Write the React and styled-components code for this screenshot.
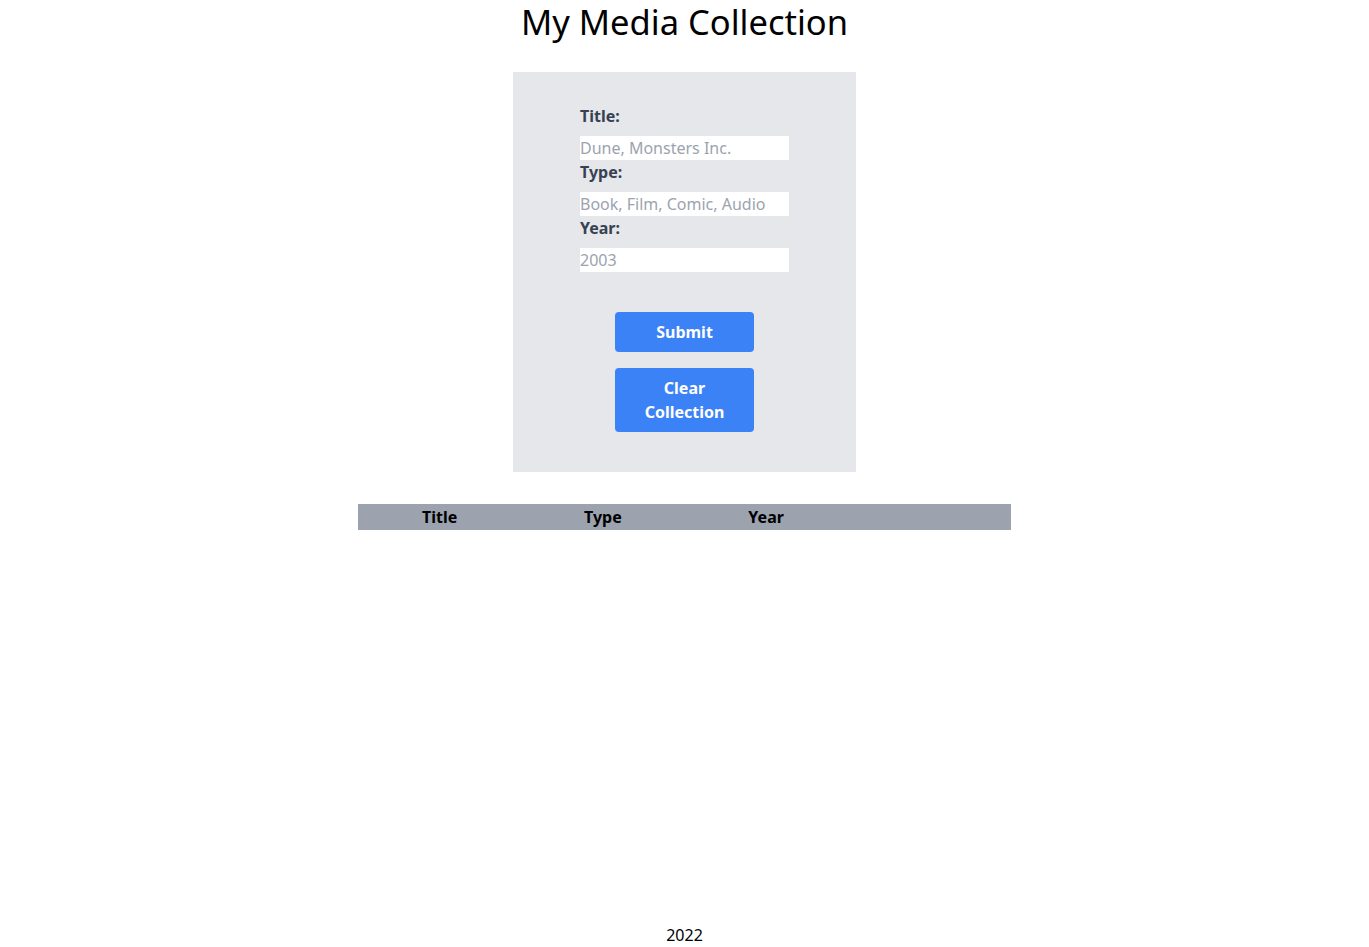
import styled, { createGlobalStyle } from 'styled-components';

const GlobalStyle = createGlobalStyle`
  html, body {
    margin: 0;
    padding: 0;
    background: #fff;
    font-family: 'Noto Sans', 'Open Sans', sans-serif;
  }
  * {
    box-sizing: border-box;
  }
`;

const FIELDS = [
  { label: 'Title:', placeholder: 'Dune, Monsters Inc.' },
  { label: 'Type:', placeholder: 'Book, Film, Comic, Audio' },
  { label: 'Year:', placeholder: '2003' },
];

const COLUMNS = ['Title', 'Type', 'Year', ''];

const App = () => {
  return (
    <Page>
      <GlobalStyle />
      <Main>
        <Heading>My Media Collection</Heading>
        <FormPanel onSubmit={(e) => e.preventDefault()}>
          <Fields>
            {FIELDS.map((f) => (
              <Field key={f.label}>
                <Label>{f.label}</Label>
                <Input placeholder={f.placeholder} />
              </Field>
            ))}
          </Fields>
          <Buttons>
            <Button type='submit'>Submit</Button>
            <Button type='button'>
              Clear
              <br />
              Collection
            </Button>
          </Buttons>
        </FormPanel>
        <Table>
          <thead>
            <tr>
              {COLUMNS.map((c, i) => (
                <Th key={i}>{c}</Th>
              ))}
            </tr>
          </thead>
          <tbody></tbody>
        </Table>
      </Main>
      <Footer>2022</Footer>
    </Page>
  );
};

export default App;

const Page = styled.div`
  display: flex;
  flex-direction: column;
  align-items: center;
  min-height: 100vh;
`;

const Main = styled.main`
  display: flex;
  flex-direction: column;
  align-items: center;
  width: 100%;
`;

const Heading = styled.h1`
  margin: 0 0 28px;
  font-size: 34.5px;
  font-weight: 400;
  line-height: 44px;
  color: #000;
`;

const FormPanel = styled.form`
  display: flex;
  flex-direction: column;
  align-items: center;

  width: 343px;
  padding: 32px 0 40px;
  background: #e5e7eb;
`;

const Fields = styled.div`
  display: flex;
  flex-direction: column;
  width: 209px;
`;

const Field = styled.div`
  display: flex;
  flex-direction: column;
`;

const Label = styled.label`
  margin-bottom: 8px;
  font-size: 16px;
  font-weight: 700;
  line-height: 24px;
  color: #374151;
`;

const Input = styled.input`
  width: 100%;
  height: 24px;
  padding: 0;
  border: none;
  outline: none;
  background: #fff;
  font-family: inherit;
  font-size: 16px;
  color: #374151;

  &::placeholder {
    color: #9ca3af;
  }
`;

const Buttons = styled.div`
  display: flex;
  flex-direction: column;
  align-items: center;
  gap: 16px;
  margin-top: 40px;
`;

const Button = styled.button`
  width: 139px;
  padding: 8px 16px;
  border: none;
  border-radius: 4px;
  background: #3b82f6;

  font-family: inherit;
  font-size: 16px;
  font-weight: 700;
  line-height: 24px;
  color: #fff;
  cursor: pointer;
`;

const Table = styled.table`
  width: 653px;
  margin-top: 32px;
  border-collapse: collapse;
  table-layout: fixed;
`;

const Th = styled.th`
  height: 26px;
  padding: 0;
  background: #9ca3af;
  font-size: 16px;
  font-weight: 700;
  color: #000;
  text-align: center;
`;

const Footer = styled.footer`
  margin-top: auto;
  font-size: 16px;
  line-height: 24px;
  color: #000;
`;
